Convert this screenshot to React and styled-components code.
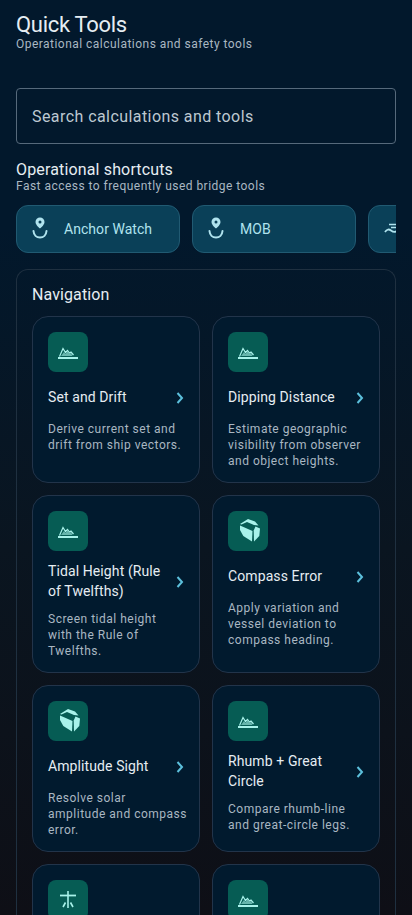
import React from 'react';
import styled, { createGlobalStyle } from 'styled-components';

const GlobalStyle = createGlobalStyle`
  html, body {
    margin: 0;
    padding: 0;
    background: #02182c;
  }
  * { box-sizing: border-box; }
`;

const Page = styled.div`
  width: 412px;
  height: 915px;
  overflow: hidden;
  padding: 12px 16px 0;
  font-family: Roboto, sans-serif;
  background: linear-gradient(180deg, #02182c 0%, #02182c 25%, #0a1520 60%, #0e0f16 100%);
`;

const Title = styled.h1`
  margin: 0;
  font-size: 22px;
  line-height: 26px;
  font-weight: 400;
  letter-spacing: -0.3px;
  color: #e6edf2;
`;

const Subtitle = styled.div`
  font-size: 12px;
  line-height: 12px;
  letter-spacing: 0.47px;
  color: #a9b7c2;
`;

const SearchBox = styled.div`
  height: 56px;
  margin-top: 38px;
  padding: 0 15px;
  display: flex;
  align-items: center;
  border: 1px solid #56697b;
  border-radius: 4px;
  font-size: 16px;
  letter-spacing: 0.43px;
  color: #bdc8d1;
`;

const SectionTitle = styled.h2`
  margin: 16px 0 0;
  font-size: 16px;
  line-height: 20px;
  font-weight: 400;
  letter-spacing: 0.15px;
  color: #e6edf2;
`;

const Shortcuts = styled.div`
  display: flex;
  gap: 12px;
  margin-top: 13px;
  overflow: hidden;
`;

const Shortcut = styled.div`
  flex: 0 0 164px;
  height: 48px;
  display: flex;
  align-items: center;
  gap: 16px;
  padding: 0 15px;
  border: 1px solid #215a72;
  border-radius: 12px;
  background: #0a4058;
  color: #b0e3ee;
  font-size: 14px;
  letter-spacing: 0.05px;
  white-space: nowrap;
`;

const Panel = styled.section`
  margin-top: 16px;
  padding: 15px 15px 0;
  border: 1px solid #1f3040;
  border-bottom: 0;
  border-radius: 12px 12px 0 0;
  min-height: 700px;
`;

const PanelTitle = styled.h3`
  margin: 0;
  font-size: 16px;
  line-height: 20px;
  font-weight: 400;
  letter-spacing: 0.1px;
  color: #e6edf2;
`;

const Grid = styled.div`
  display: grid;
  grid-template-columns: 168px 168px;
  gap: 12px;
  margin-top: 11px;
`;

const Card = styled.div`
  padding: 15px 15px 13px;
  border: 1px solid #22344a;
  border-radius: 16px;
  background: #011a2e;
  min-height: 100px;
`;

const IconTile = styled.div`
  width: 40px;
  height: 40px;
  display: flex;
  align-items: center;
  justify-content: center;
  border-radius: 8px;
  background: #065c54;
  color: #a8f2ea;
`;

const TitleRow = styled.div`
  display: flex;
  align-items: center;
  justify-content: space-between;
  min-height: 30px;
  margin-top: 10px;
  padding-bottom: 1px;
`;

const CardTitle = styled.div`
  font-size: 14px;
  line-height: 20px;
  letter-spacing: 0.1px;
  color: #e6edf2;
`;

const Chevron = styled.svg`
  flex: 0 0 auto;
  width: 8px;
  height: 12px;
  margin: 2px 0 0 6px;
  color: #5cc0dc;
`;

const CardText = styled.div`
  margin: 9px -3px 0 0;
  font-size: 12px;
  line-height: 16px;
  letter-spacing: 0.5px;
  color: #a9b7c2;
  white-space: pre-line;
`;

const Leaf = styled.svg`
  margin-left: 3px;
`;

const TerrainIcon = () => (
  <svg width="20" height="14" viewBox="0 0 20 14" fill="none">
    <path d="M1.500 11.500 5 3.500l2.500 4 2-2 2 2.500 1.500-1 2.500 3" stroke="currentColor" strokeWidth="1.200" />
    <path d="M6 7l1.500 2 2-2.500 2 2.500 1.500-1 1.500 3H3z" fill="currentColor" opacity="0.6" />
    <rect x="0" y="12" width="20" height="2" fill="currentColor" />
  </svg>
);

const LeafIcon = () => (
  <Leaf width="20" height="24" viewBox="0 0 20 24" fill="currentColor">
    <path d="M0 5 8 0l7 2.500 3.500 4-4.500-.5L7 3 1.500 5.500z" />
    <path d="M0 6.500 12.500 12 12 22.500 3.300 17 0 11z" />
    <path d="M15.500 7.500 20 9.500l-.7 7.500-5.300 5.500-.3-11z" />
  </Leaf>
);

const MastIcon = () => (
  <svg width="16" height="18" viewBox="0 0 16 18" fill="none" stroke="currentColor" strokeWidth="1.600">
    <path d="M8 0v17" />
    <path d="M0 4.500h16" strokeWidth="1.800" />
    <path d="M5.500 11.500 3 16M10.500 11.500 13 16" />
  </svg>
);

const PinIcon = () => (
  <svg width="16" height="24" viewBox="0 0 16 24" fill="none">
    <path
      d="M8 0.500a4.500 4.500 0 0 0-4.500 4.500c0 3 4.500 6.500 4.500 6.500s4.500-3.500 4.500-6.500a4.500 4.500 0 0 0-4.500-4.500zm0 3a1.500 1.500 0 1 1 0 3 1.500 1.500 0 0 1 0-3z"
      fill="currentColor"
      fillRule="evenodd"
    />
    <path d="M1.500 14c.3 4 3 6.500 6.500 6.500s6.200-2.500 6.500-6.500" stroke="currentColor" strokeWidth="2" strokeLinecap="round" />
  </svg>
);

const WaveIcon = () => (
  <svg width="20" height="14" viewBox="0 0 20 14" fill="none" stroke="currentColor" strokeWidth="1.500">
    <path d="M5 2.500h13M7 5.500h11" />
    <path d="M1 10c2-3 4-3 6-1.500s4 2 6 .5 3-1 5-.5" strokeWidth="1.800" />
  </svg>
);

const CardChevron = () => (
  <Chevron viewBox="0 0 8 12" fill="none" stroke="currentColor" strokeWidth="2">
    <path d="M1.500 1 6 6l-4.500 5" />
  </Chevron>
);

const shortcuts = [
  { name: 'Anchor Watch', icon: <PinIcon /> },
  { name: 'MOB', icon: <PinIcon /> },
  { icon: <WaveIcon /> },
];

const tools = [
  { title: 'Set and Drift', text: 'Derive current set and drift from ship vectors.', icon: <TerrainIcon /> },
  { title: 'Dipping Distance', text: 'Estimate geographic visibility from observer and object heights.', icon: <TerrainIcon /> },
  { title: 'Tidal Height (Rule of Twelfths)', text: 'Screen tidal height\nwith the Rule of\nTwelfths.', icon: <TerrainIcon /> },
  { title: 'Compass Error', text: 'Apply variation and vessel deviation to compass heading.', icon: <LeafIcon /> },
  { title: 'Amplitude Sight', text: 'Resolve solar amplitude and compass error.', icon: <LeafIcon /> },
  { title: 'Rhumb + Great Circle', text: 'Compare rhumb-line and great-circle legs.', icon: <TerrainIcon /> },
  { icon: <MastIcon /> },
  { icon: <TerrainIcon /> },
];

export default function App() {
  return (
    <Page>
      <GlobalStyle />
      <Title>Quick Tools</Title>
      <Subtitle>Operational calculations and safety tools</Subtitle>
      <SearchBox>Search calculations and tools</SearchBox>
      <SectionTitle>Operational shortcuts</SectionTitle>
      <Subtitle>Fast access to frequently used bridge tools</Subtitle>
      <Shortcuts>
        {shortcuts.map((item, i) => (
          <Shortcut key={i}>
            {item.icon}
            {item.name && <span>{item.name}</span>}
          </Shortcut>
        ))}
      </Shortcuts>
      <Panel>
        <PanelTitle>Navigation</PanelTitle>
        <Grid>
          {tools.map((tool, i) => (
            <Card key={i}>
              <IconTile>{tool.icon}</IconTile>
              {tool.title && (
                <>
                  <TitleRow>
                    <CardTitle>{tool.title}</CardTitle>
                    <CardChevron />
                  </TitleRow>
                  <CardText>{tool.text}</CardText>
                </>
              )}
            </Card>
          ))}
        </Grid>
      </Panel>
    </Page>
  );
}
